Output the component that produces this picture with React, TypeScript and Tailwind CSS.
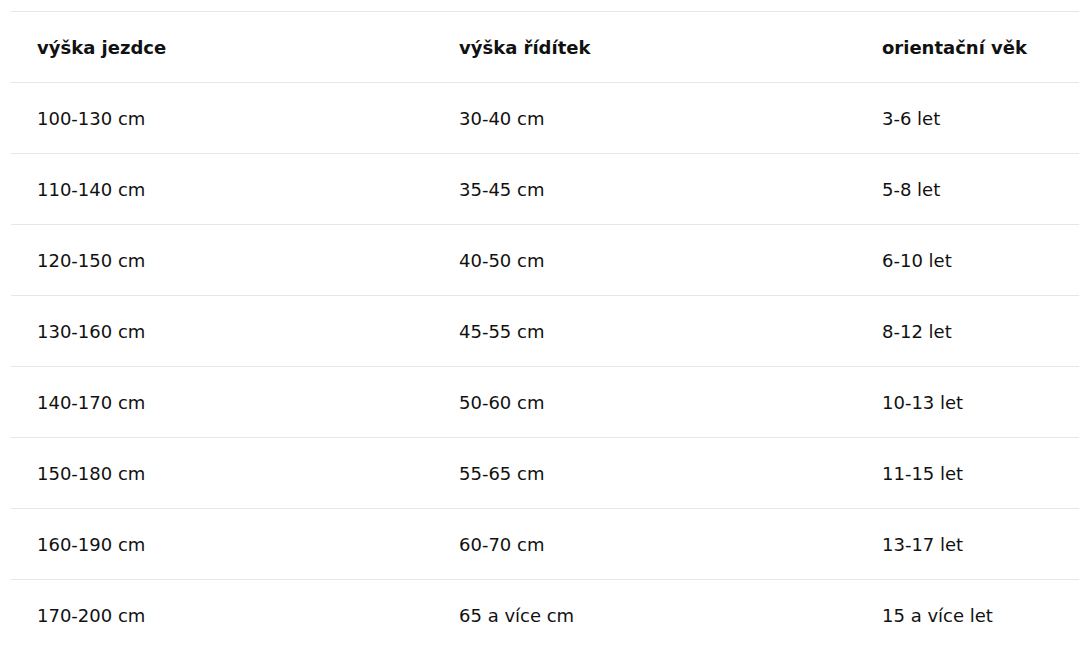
import React from "react";

const rows: [string, string, string][] = [
  ["100-130 cm", "30-40 cm", "3-6 let"],
  ["110-140 cm", "35-45 cm", "5-8 let"],
  ["120-150 cm", "40-50 cm", "6-10 let"],
  ["130-160 cm", "45-55 cm", "8-12 let"],
  ["140-170 cm", "50-60 cm", "10-13 let"],
  ["150-180 cm", "55-65 cm", "11-15 let"],
  ["160-190 cm", "60-70 cm", "13-17 let"],
  ["170-200 cm", "65 a více cm", "15 a více let"],
];

export default function App() {
  return (
    <div
      className="min-h-screen bg-white pl-[11px] pt-[11px] text-[#111]"
      style={{ fontFamily: '"DejaVu Sans", "Open Sans", sans-serif' }}
    >
      <div className="grid grid-cols-[422px_423px_1fr] h-[71px] items-center border-t border-[#e6e6e6] text-[18px] font-bold">
        <div className="pl-[26px]">výška jezdce</div>
        <div className="pl-[26px]">výška řídítek</div>
        <div className="pl-[26px]">orientační věk</div>
      </div>
      {rows.map((r, i) => (
        <div
          key={i}
          className="grid grid-cols-[422px_423px_1fr] h-[71px] items-center border-t border-[#e6e6e6] text-[18px]"
        >
          <div className="pl-[26px]">{r[0]}</div>
          <div className="pl-[26px]">{r[1]}</div>
          <div className="pl-[26px]">{r[2]}</div>
        </div>
      ))}
    </div>
  );
}
